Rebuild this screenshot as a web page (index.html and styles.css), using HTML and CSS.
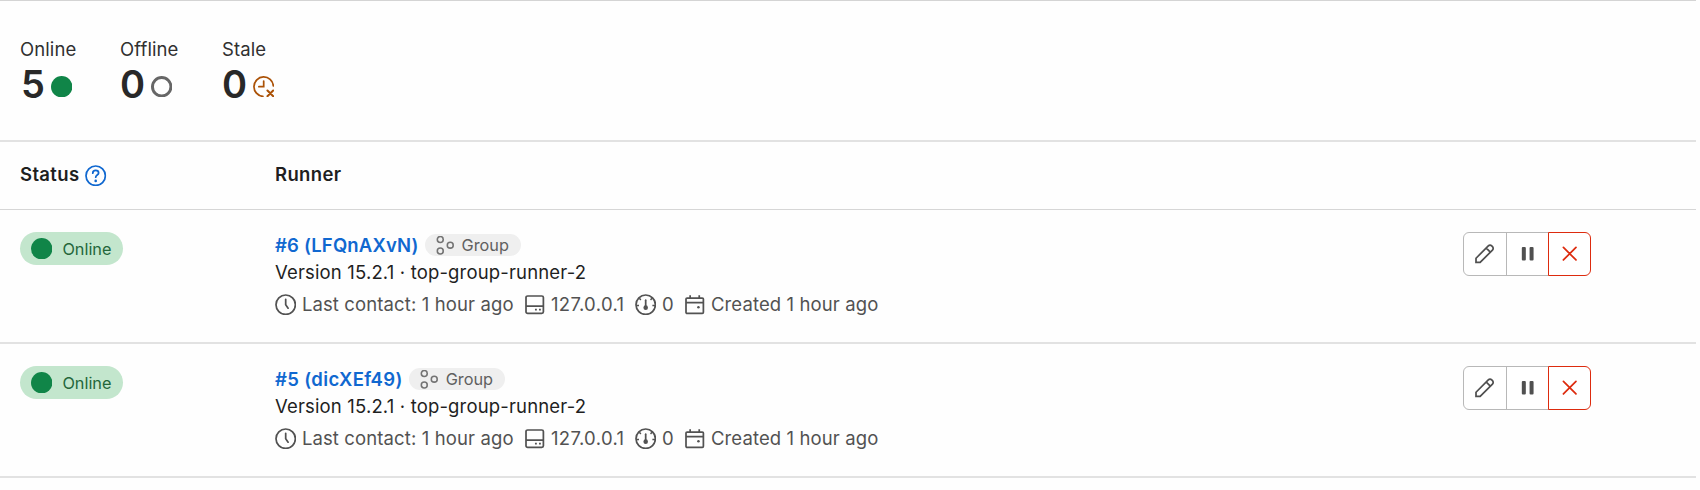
FILE: index.html
```
<!DOCTYPE html>
<html lang="en">
<head>
<meta charset="utf-8">
<title>Runners</title>
<link rel="stylesheet" href="styles.css">
</head>
<body>
<svg class="sprite" width="0" height="0">
  <symbol id="clock" viewBox="0 0 16 16"><circle cx="8" cy="8" r="7.25"/><path d="M8 4v4l1.8 2.6" stroke-linecap="round"/></symbol>
  <symbol id="disk" viewBox="0 0 16 16"><rect x="1.5" y="1.5" width="13" height="13" rx="1.2"/><path d="M1.5 9h13"/><path d="M8.2 11.7h1.4M11.2 11.7h1.4"/></symbol>
  <symbol id="gauge" viewBox="0 0 16 16"><circle cx="8" cy="8" r="7.25"/><path d="M8 4.6v5.2" stroke-linecap="round"/><circle cx="8" cy="10.2" r="1.7" class="solid"/><path d="M3 8.6H1M15 8.6h-2M4.4 4.4 3.2 3.2M11.6 4.4l1.2-1.2" stroke-width="1.1"/></symbol>
  <symbol id="calendar" viewBox="0 0 16 16"><rect x="1.5" y="3" width="13" height="11.5" rx=".8"/><path d="M1.5 6.4h13M4.6.9v2.4M11.4.9v2.4"/><circle cx="10.8" cy="9.9" r=".95" class="solid"/></symbol>
  <symbol id="group" viewBox="0 0 16 16"><circle cx="3.6" cy="2.9" r="2.5"/><circle cx="3.6" cy="12.6" r="2.5"/><circle cx="12" cy="7.7" r="2.5"/></symbol>
  <symbol id="pencil" viewBox="0 0 16 16"><path d="M1.5 14.5v-3.1l9.2-9.2a1.8 1.8 0 0 1 2.55 0l.55.55a1.8 1.8 0 0 1 0 2.55l-9.2 9.2zM9.2 3.8l3 3"/></symbol>
  <symbol id="pause" viewBox="0 0 16 16"><rect x="3.6" y="2.9" width="3" height="10.2" rx=".8" class="solid"/><rect x="9.4" y="2.9" width="3" height="10.2" rx=".8" class="solid"/></symbol>
  <symbol id="close" viewBox="0 0 16 16"><path d="m3.3 3.3 9.4 9.4M12.7 3.3l-9.4 9.4" stroke-linecap="round"/></symbol>
  <symbol id="help" viewBox="0 0 16 16"><circle cx="8" cy="8" r="7.25"/><path d="M5.8 6.1c0-1.1.9-2 2.2-2s2.2.8 2.2 1.9c0 1.5-2.2 1.5-2.2 3.1" stroke-linecap="round"/><circle cx="8" cy="11.9" r="1" class="solid"/></symbol>
  <symbol id="dot" viewBox="0 0 16 16"><circle cx="8" cy="8" r="8" class="solid"/></symbol>
  <symbol id="ring" viewBox="0 0 16 16"><circle cx="8" cy="8" r="6.9" stroke-width="2.2"/></symbol>
  <symbol id="stale" viewBox="0 0 16 16"><path d="M7.4 15.2A7.25 7.25 0 1 1 15.2 7.4M8 3.8V8H4.4" stroke-linecap="round"/><path d="m10.8 10.8 4.3 4.3M15.1 10.8l-4.3 4.3" stroke-width="1.5" stroke-linecap="round"/></symbol>
</svg>

<section class="stats">
  <div class="stat online"><div class="label">Online</div><div class="value"><span>5</span><svg class="icon green"><use href="#dot"/></svg></div></div>
  <div class="stat offline"><div class="label">Offline</div><div class="value"><span>0</span><svg class="icon gray"><use href="#ring"/></svg></div></div>
  <div class="stat"><div class="label">Stale</div><div class="value"><span>0</span><svg class="icon orange"><use href="#stale"/></svg></div></div>
</section>

<main class="table">
  <div class="row head">
    <div class="col-status"><span>Status</span><svg class="icon blue"><use href="#help"/></svg></div>
    <div class="col-runner"><span>Runner</span></div>
  </div>
  <div class="row">
    <div class="col-status"><span class="badge"><svg class="icon green"><use href="#dot"/></svg><span>Online</span></span></div>
    <div class="col-runner">
      <div class="title"><a class="link">#6 (LFQnAXvN)</a><span class="tag"><svg class="icon"><use href="#group"/></svg><span>Group</span></span></div>
      <div class="version">Version 15.2.1 · top-group-runner-2</div>
      <div class="meta">
        <span class="item contact"><svg class="icon"><use href="#clock"/></svg><span>Last contact: 1 hour ago</span></span>
        <span class="item ip"><svg class="icon"><use href="#disk"/></svg><span>127.0.0.1</span></span>
        <span class="item jobs"><svg class="icon"><use href="#gauge"/></svg><span>0</span></span>
        <span class="item"><svg class="icon"><use href="#calendar"/></svg><span>Created 1 hour ago</span></span>
      </div>
    </div>
    <div class="actions"><button class="btn"><svg class="icon"><use href="#pencil"/></svg></button><button class="btn"><svg class="icon"><use href="#pause"/></svg></button><button class="btn danger"><svg class="icon"><use href="#close"/></svg></button></div>
  </div>
  <div class="row">
    <div class="col-status"><span class="badge"><svg class="icon green"><use href="#dot"/></svg><span>Online</span></span></div>
    <div class="col-runner">
      <div class="title"><a class="link second">#5 (dicXEf49)</a><span class="tag"><svg class="icon"><use href="#group"/></svg><span>Group</span></span></div>
      <div class="version">Version 15.2.1 · top-group-runner-2</div>
      <div class="meta">
        <span class="item contact"><svg class="icon"><use href="#clock"/></svg><span>Last contact: 1 hour ago</span></span>
        <span class="item ip"><svg class="icon"><use href="#disk"/></svg><span>127.0.0.1</span></span>
        <span class="item jobs"><svg class="icon"><use href="#gauge"/></svg><span>0</span></span>
        <span class="item"><svg class="icon"><use href="#calendar"/></svg><span>Created 1 hour ago</span></span>
      </div>
    </div>
    <div class="actions"><button class="btn"><svg class="icon"><use href="#pencil"/></svg></button><button class="btn"><svg class="icon"><use href="#pause"/></svg></button><button class="btn danger"><svg class="icon"><use href="#close"/></svg></button></div>
  </div>
</main>
</body>
</html>
```
FILE: styles.css
```
* { box-sizing: border-box; }
body {
  margin: 0;
  width: 1696px;
  height: 490px;
  overflow: hidden;
  background: #fefefe;
  color: #1f1f1f;
  font: 18.5px/27px Inter, "Liberation Sans", sans-serif;
}
.sprite { display: block; height: 0; }
.icon {
  display: block;
  flex: none;
  width: 21.4px;
  height: 21.4px;
  fill: none;
  stroke: currentColor;
  stroke-width: 1.3;
}
.solid { fill: currentColor; stroke: none; }
.green { color: #108548; }
.gray { color: #666; }
.orange { color: #ab5207; }
.blue { color: #1068d0; }

.stats {
  display: flex;
  height: 142px;
  padding: 35px 20px 0;
  border-top: 1px solid #d4d4d4;
  border-bottom: 2px solid #e2e2e2;
}
.stat.online { width: 100px; }
.stat.offline { width: 102px; }
.label { color: #303030; letter-spacing: .1px; }
.value {
  display: flex;
  align-items: center;
  gap: 6px;
  height: 43px;
  font-size: 38px;
  font-weight: 600;
  color: #282828;
}
.online .value { padding-left: 1px; }
.value .icon { margin-top: 4px; }

.row {
  display: flex;
  height: 134px;
  padding: 22px 20px 0;
  border-bottom: 2px solid #e2e2e2;
}
.row.head {
  height: 68px;
  padding-top: 19px;
  font-weight: 600;
  letter-spacing: .36px;
  border-bottom: 1px solid #d6d6d6;
}
.col-status { display: flex; align-items: flex-start; width: 255px; }
.head .col-status { gap: 6px; }
.head .icon { margin-top: 4px; }
.col-runner { width: 1188px; }
.badge {
  display: flex;
  align-items: center;
  gap: 10px;
  width: 103px;
  height: 33px;
  padding-left: 11px;
  border-radius: 17px;
  background: #c3e6cd;
  color: #24663b;
  font-size: 16.3px;
}
.badge span { padding-top: 1px; }
.title { display: flex; align-items: center; gap: 6px; height: 26px; }
.link { color: #1068d0; font-weight: 600; letter-spacing: .17px; }
.link.second { letter-spacing: .34px; }
.tag {
  display: flex;
  align-items: center;
  gap: 7px;
  width: 96px;
  height: 22px;
  padding-left: 11px;
  border-radius: 11px;
  background: #efefef;
  color: #606060;
  font-size: 16.3px;
}
.tag .icon { width: 19px; height: 19px; color: #737373; }
.version { height: 27px; padding-top: .5px; letter-spacing: .16px; }
.meta {
  display: flex;
  align-items: center;
  height: 27px;
  margin-top: 6px;
  color: #525252;
  letter-spacing: .12px;
}
.item { display: flex; align-items: center; gap: 5.5px; }
.contact { width: 249px; }
.ip { width: 111px; letter-spacing: .35px; }
.jobs { width: 49px; }
.actions { display: flex; height: 43px; }
.btn {
  display: flex;
  align-items: center;
  justify-content: center;
  width: 43px;
  height: 44px;
  padding: 0;
  border: 1px solid #b8b8b8;
  border-radius: 0;
  background: #fff;
  color: #505050;
}
.btn + .btn { margin-left: -1px; }
.btn:first-child { width: 44px; border-radius: 6px 0 0 6px; }
.btn.danger { border-color: #dd2b0e; border-radius: 0 6px 6px 0; color: #dd2b0e; }
```
